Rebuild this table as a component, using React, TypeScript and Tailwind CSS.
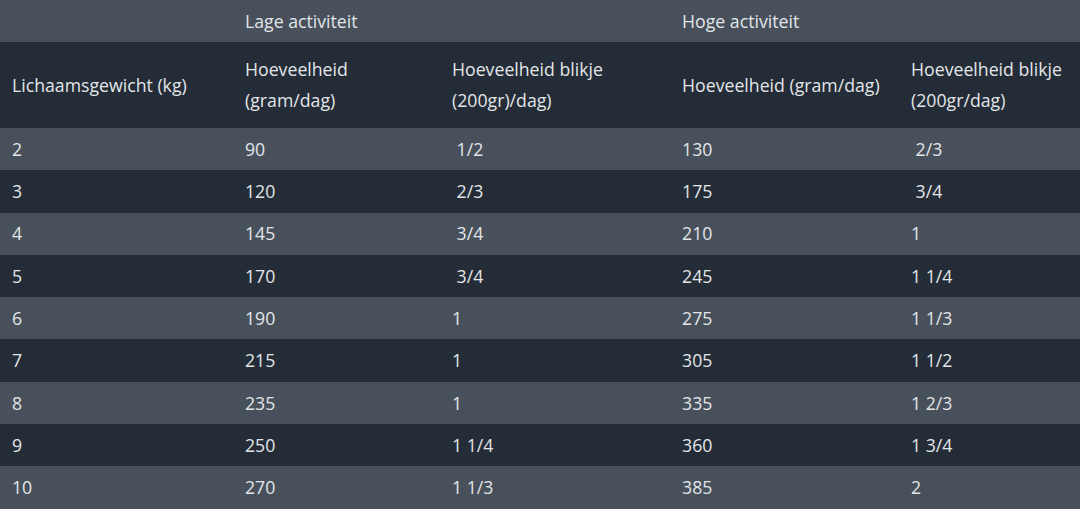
const rows: [string, string, string, string, string][] = [
  ['2', '90', '\u00a01/2', '130', '\u00a02/3'],
  ['3', '120', '\u00a02/3', '175', '\u00a03/4'],
  ['4', '145', '\u00a03/4', '210', '1'],
  ['5', '170', '\u00a03/4', '245', '1 1/4'],
  ['6', '190', '1', '275', '1 1/3'],
  ['7', '215', '1', '305', '1 1/2'],
  ['8', '235', '1', '335', '1 2/3'],
  ['9', '250', '1 1/4', '360', '1 3/4'],
  ['10', '270', '1 1/3', '385', '2'],
];

export default function App() {
  return (
    <div className="w-[1080px] h-[509px] overflow-hidden bg-[#232c37] text-[#e3e6e9] font-['Open_Sans',sans-serif] text-[17.7px]">
      <table className="w-full table-fixed border-collapse">
        <colgroup>
          <col className="w-[233px]" />
          <col className="w-[207px]" />
          <col className="w-[230px]" />
          <col className="w-[229px]" />
          <col />
        </colgroup>
        <thead>
          <tr className="bg-[#47505b] h-[42px]">
            <th className="px-3 text-left font-normal"></th>
            <th colSpan={2} className="px-3 text-left font-normal">Lage activiteit</th>
            <th colSpan={2} className="px-3 text-left font-normal">Hoge activiteit</th>
          </tr>
          <tr className="bg-[#232c37] h-[86px] leading-[31px]">
            <th className="px-3 text-left font-normal">Lichaamsgewicht (kg)</th>
            <th className="px-3 text-left font-normal">Hoeveelheid<br />(gram/dag)</th>
            <th className="px-3 text-left font-normal">Hoeveelheid blikje<br />(200gr)/dag)</th>
            <th className="px-3 text-left font-normal whitespace-nowrap">Hoeveelheid (gram/dag)</th>
            <th className="px-3 text-left font-normal whitespace-nowrap">Hoeveelheid blikje<br />(200gr/dag)</th>
          </tr>
        </thead>
        <tbody>
          {rows.map((r, i) => (
            <tr key={r[0]} className={i % 2 === 0 ? 'bg-[#47505b] h-[42.3px]' : 'bg-[#232c37] h-[42.3px]'}>
              {r.map((c, j) => (
                <td key={j} className="px-3 text-left">{c}</td>
              ))}
            </tr>
          ))}
        </tbody>
      </table>
    </div>
  );
}
